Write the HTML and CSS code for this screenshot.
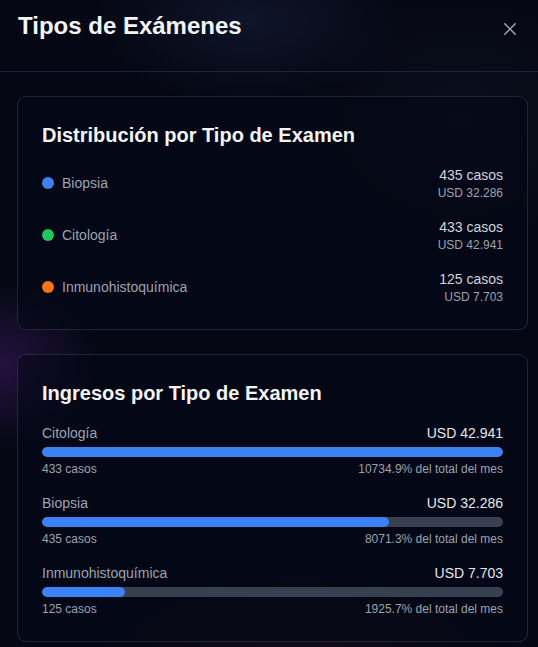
FILE: index.html
```html
<!DOCTYPE html>
<html lang="es">
<head>
<meta charset="utf-8">
<title>Tipos de Exámenes</title>
<link rel="stylesheet" href="styles.css">
</head>
<body>
<div class="dialog">
  <header class="dialog-header">
    <h1 class="dialog-title">Tipos de Exámenes</h1>
    <button class="close-btn" aria-label="Cerrar">
      <svg width="12" height="12" viewBox="0 0 12 12" fill="none" stroke="currentColor" stroke-width="1.5" stroke-linecap="round"><path d="M0.75 0.75L11.25 11.25M11.25 0.75L0.75 11.25"/></svg>
    </button>
  </header>
  <main class="dialog-body">
    <section class="card">
      <h2 class="card-title">Distribución por Tipo de Examen</h2>
      <ul class="dist-list">
        <li class="dist-row">
          <div class="dist-label"><span class="dot dot-blue"></span><span>Biopsia</span></div>
          <div class="dist-values"><span class="cases">435 casos</span><span class="amount">USD 32.286</span></div>
        </li>
        <li class="dist-row">
          <div class="dist-label"><span class="dot dot-green"></span><span>Citología</span></div>
          <div class="dist-values"><span class="cases">433 casos</span><span class="amount">USD 42.941</span></div>
        </li>
        <li class="dist-row">
          <div class="dist-label"><span class="dot dot-orange"></span><span>Inmunohistoquímica</span></div>
          <div class="dist-values"><span class="cases">125 casos</span><span class="amount">USD 7.703</span></div>
        </li>
      </ul>
    </section>
    <section class="card">
      <h2 class="card-title">Ingresos por Tipo de Examen</h2>
      <div class="income-list">
        <div class="income-item">
          <div class="income-top"><span class="income-name">Citología</span><span class="income-amount">USD 42.941</span></div>
          <div class="track"><div class="fill" style="width:100%"></div></div>
          <div class="income-bottom"><span>433 casos</span><span>10734.9% del total del mes</span></div>
        </div>
        <div class="income-item">
          <div class="income-top"><span class="income-name">Biopsia</span><span class="income-amount">USD 32.286</span></div>
          <div class="track"><div class="fill" style="width:75.2%"></div></div>
          <div class="income-bottom"><span>435 casos</span><span>8071.3% del total del mes</span></div>
        </div>
        <div class="income-item">
          <div class="income-top"><span class="income-name">Inmunohistoquímica</span><span class="income-amount">USD 7.703</span></div>
          <div class="track"><div class="fill" style="width:17.9%"></div></div>
          <div class="income-bottom"><span>125 casos</span><span>1925.7% del total del mes</span></div>
        </div>
      </div>
    </section>
  </main>
</div>
</body>
</html>
```
FILE: styles.css
```css
* { box-sizing: border-box; }
html, body {
  margin: 0;
  padding: 0;
  height: 100%;
}
body {
  font-family: "Liberation Sans", Arial, sans-serif;
  color: #e5e7eb;
  background-color: #050814;
  background-image:
    radial-gradient(ellipse 220px 120px at 250px 20px, rgba(30, 45, 80, 0.35), transparent 70%),
    radial-gradient(ellipse 130px 110px at 0px 365px, rgba(75, 30, 115, 0.45), transparent 75%),
    radial-gradient(ellipse 260px 120px at 300px 660px, rgba(70, 20, 40, 0.25), transparent 75%),
    radial-gradient(ellipse 200px 160px at 460px 120px, rgba(30, 35, 55, 0.25), transparent 75%);
  overflow: hidden;
}
.dialog {
  position: relative;
  width: 538px;
  min-height: 647px;
}
.dialog-header {
  padding: 10px 18px 29px 18px;
  border-bottom: 1px solid #1c2333;
}
.dialog-title {
  margin: 0;
  font-size: 24px;
  line-height: 32px;
  font-weight: 700;
  color: #f3f4f6;
}
.close-btn {
  position: absolute;
  top: 23px;
  right: 22px;
  width: 12px;
  height: 12px;
  padding: 0;
  border: 0;
  background: none;
  color: #9ca3af;
  display: flex;
}
.dialog-body {
  padding: 24px 10px 24px 17px;
  display: flex;
  flex-direction: column;
  gap: 24px;
}
.card {
  border: 1px solid rgba(51, 63, 85, 0.55);
  border-radius: 9px;
  background: rgba(4, 8, 22, 0.55);
  padding: 24px;
}
.card-title {
  margin: 0 0 16px 0;
  font-size: 20px;
  line-height: 28px;
  font-weight: 700;
  color: #f3f4f6;
}
.dist-list {
  list-style: none;
  margin: 0;
  padding: 0;
  display: flex;
  flex-direction: column;
  gap: 16px;
}
.dist-row {
  display: flex;
  justify-content: space-between;
  align-items: center;
}
.dist-label {
  display: flex;
  align-items: center;
  gap: 8px;
  font-size: 14px;
  line-height: 20px;
  color: #9ca3af;
}
.dot {
  width: 12px;
  height: 12px;
  border-radius: 50%;
}
.dot-blue { background: #3b82f6; }
.dot-green { background: #22c55e; }
.dot-orange { background: #f97316; }
.dist-values {
  display: flex;
  flex-direction: column;
  align-items: flex-end;
}
.cases {
  font-size: 14px;
  line-height: 20px;
  color: #d1d5db;
}
.amount {
  font-size: 12px;
  line-height: 16px;
  color: #9ca3af;
}
.income-list {
  display: flex;
  flex-direction: column;
  gap: 16px;
}
.income-top {
  display: flex;
  justify-content: space-between;
  font-size: 14px;
  line-height: 20px;
  margin-bottom: 4px;
}
.income-name { color: #9ca3af; }
.income-amount { color: #e5e7eb; }
.track {
  height: 10px;
  border-radius: 9999px;
  background: #374151;
  overflow: hidden;
}
.fill {
  height: 100%;
  border-radius: 9999px;
  background: #3b82f6;
}
.income-bottom {
  display: flex;
  justify-content: space-between;
  margin-top: 4px;
  font-size: 12px;
  line-height: 16px;
  color: #9ca3af;
}
```
